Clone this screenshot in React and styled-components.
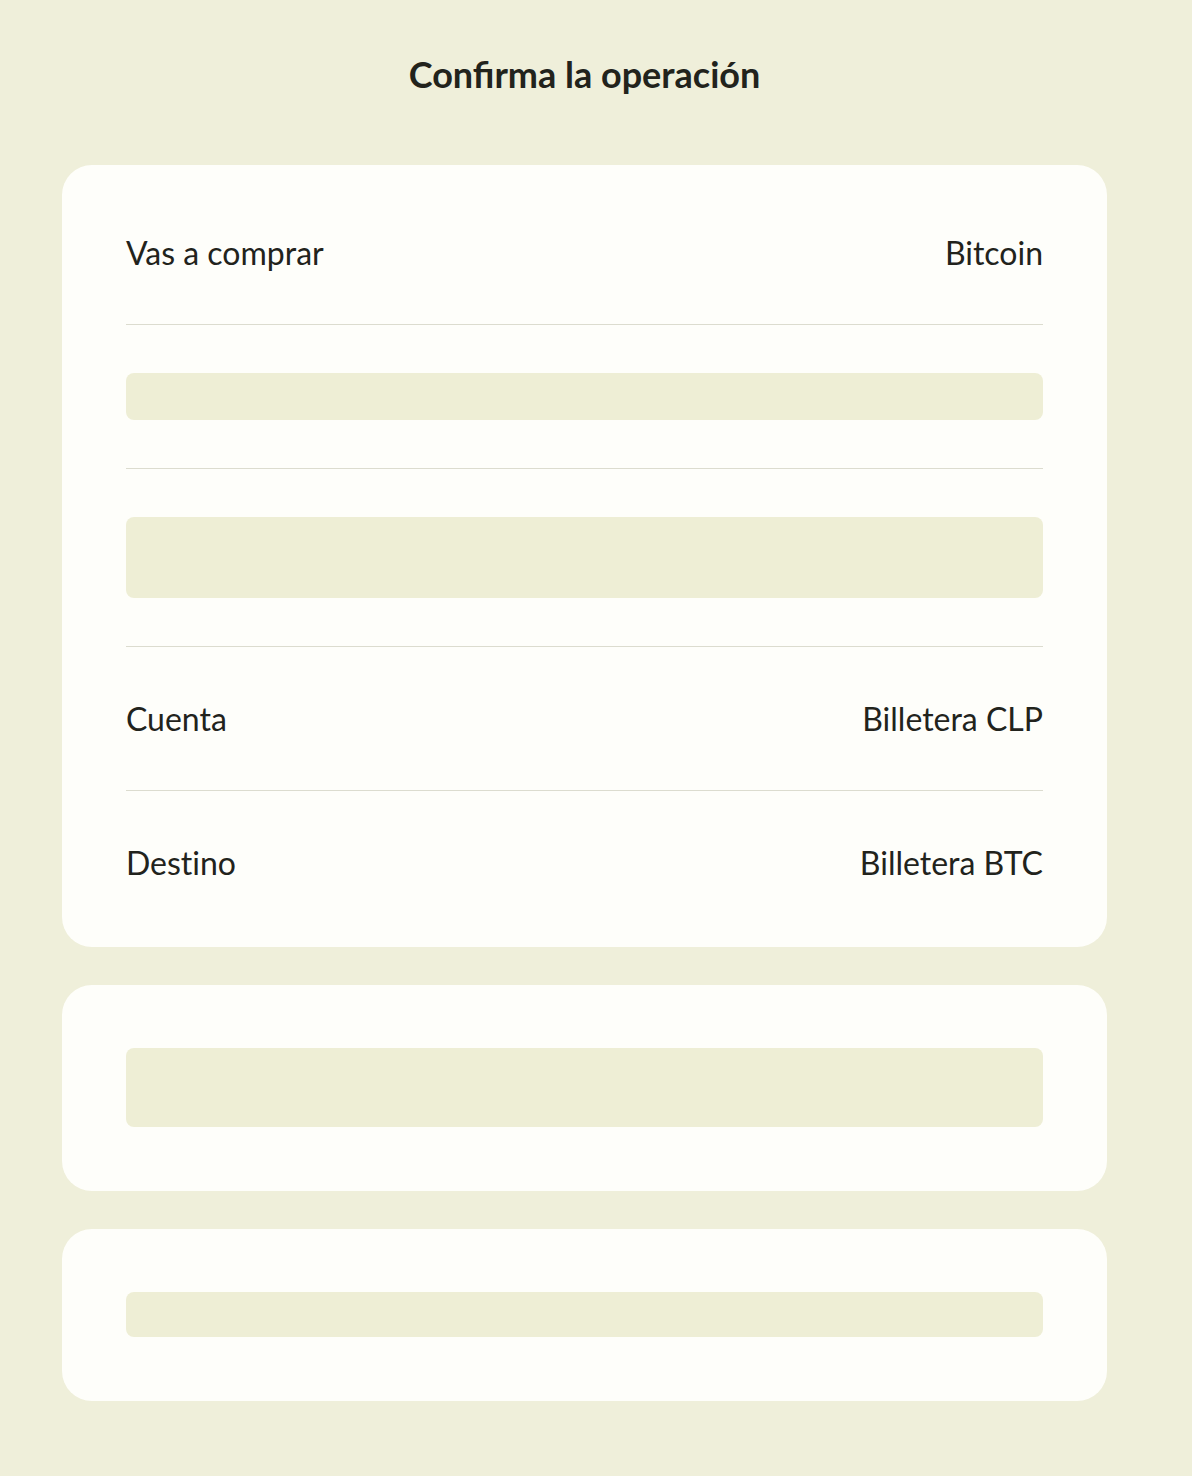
import React from "react";
import styled, { createGlobalStyle } from "styled-components";

const GlobalStyle = createGlobalStyle`
  * { box-sizing: border-box; }
  body {
    margin: 0;
    background: #efefda;
    font-family: Lato, "Noto Sans", sans-serif;
    color: #22231c;
  }
`;

const Page = styled.div`
  width: 1192px;
  min-height: 1476px;
  padding: 51px 85px 75px 62px;
  display: flex;
  flex-direction: column;
`;

const Title = styled.h1`
  margin: 0 0 68px 0;
  height: 46px;
  line-height: 46px;
  text-align: center;
  font-size: 36px;
  font-weight: 700;
  color: #22231c;
`;

const Cards = styled.div`
  display: flex;
  flex-direction: column;
  gap: 38px;
`;

const Card = styled.section`
  background: #fefefa;
  border-radius: 30px;
  padding: ${(p) => p.pad || "16px 64px 13px"};
`;

const Row = styled.div`
  display: flex;
  justify-content: space-between;
  align-items: center;
  padding: 48px 0;
  border-bottom: ${(p) => (p.last ? "none" : "1px solid #dcdccf")};
`;

const Label = styled.span`
  font-size: 32px;
  line-height: 47px;
  font-weight: 400;
  font-variant-ligatures: none;
`;

const Value = styled(Label)`
  text-align: right;
`;

const Skeleton = styled.div`
  width: 100%;
  height: ${(p) => p.h}px;
  border-radius: 8px;
  background: #eeeed5;
`;

const rows = [
  { type: "text", label: "Vas a comprar", value: "Bitcoin" },
  { type: "skel", h: 47 },
  { type: "skel", h: 81 },
  { type: "text", label: "Cuenta", value: "Billetera CLP" },
  { type: "text", label: "Destino", value: "Billetera BTC" },
];

export default function App() {
  return (
    <>
      <GlobalStyle />
      <Page>
        <Title>Confirma la operación</Title>
        <Cards>
          <Card>
            {rows.map((r, i) => (
              <Row key={i} last={i === rows.length - 1}>
                {r.type === "text" ? (
                  <>
                    <Label>{r.label}</Label>
                    <Value>{r.value}</Value>
                  </>
                ) : (
                  <Skeleton h={r.h} />
                )}
              </Row>
            ))}
          </Card>
          <Card pad="63px 64px 64px">
            <Skeleton h={79} />
          </Card>
          <Card pad="63px 64px 64px">
            <Skeleton h={45} />
          </Card>
        </Cards>
      </Page>
    </>
  );
}
